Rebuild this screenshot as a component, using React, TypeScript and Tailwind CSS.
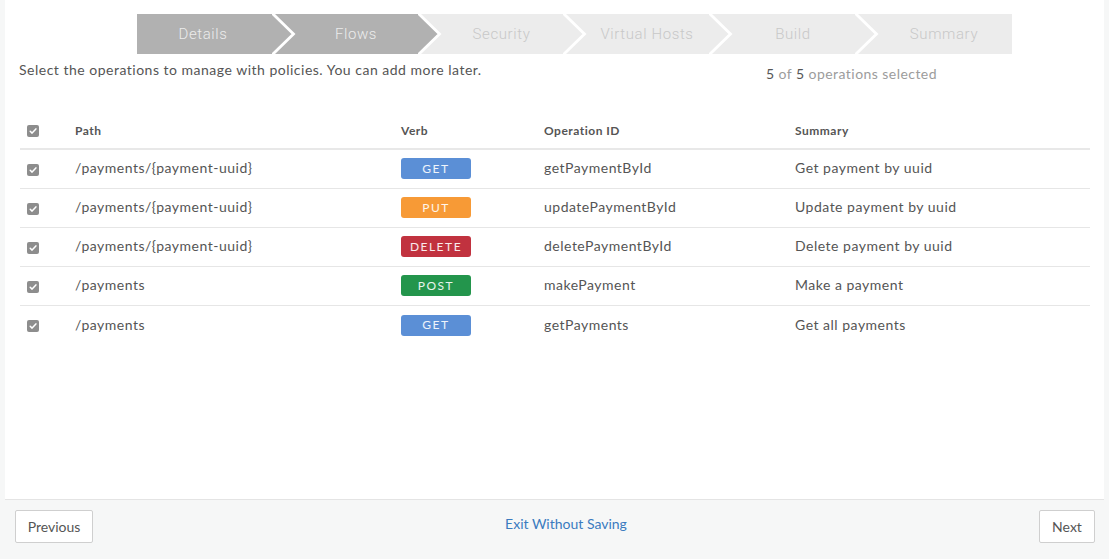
import React from 'react';

const steps = [
  { label: 'Details', done: true, box: 'w-[146px] pr-[14px]' },
  { label: 'Flows', done: true, box: 'w-[146px]' },
  { label: 'Security', done: false, box: 'w-[145px]' },
  { label: 'Virtual Hosts', done: false, box: 'w-[146px]' },
  { label: 'Build', done: false, box: 'w-[146px]' },
  { label: 'Summary', done: false, box: 'w-[146px] pl-[10px]' },
];

const operations = [
  { path: '/payments/{payment-uuid}', verb: 'GET', opId: 'getPaymentById', summary: 'Get payment by uuid' },
  { path: '/payments/{payment-uuid}', verb: 'PUT', opId: 'updatePaymentById', summary: 'Update payment by uuid' },
  { path: '/payments/{payment-uuid}', verb: 'DELETE', opId: 'deletePaymentById', summary: 'Delete payment by uuid' },
  { path: '/payments', verb: 'POST', opId: 'makePayment', summary: 'Make a payment' },
  { path: '/payments', verb: 'GET', opId: 'getPayments', summary: 'Get all payments' },
];

const verbColors: Record<string, string> = {
  GET: 'bg-[#5b8fd6]',
  PUT: 'bg-[#f79a36]',
  DELETE: 'bg-[#c1323f]',
  POST: 'bg-[#23954c]',
};

function Checkbox() {
  return (
    <svg width="12" height="12" viewBox="0 0 12 12">
      <rect x="0" y="0" width="12" height="12" rx="2" fill="#8d8d8d" />
      <path d="M3.2 6.3 L5.1 8.1 L8.9 3.9" fill="none" stroke="#fff" strokeWidth="1.5" strokeLinecap="round" strokeLinejoin="round" />
    </svg>
  );
}

function Wizard() {
  return (
    <div className="ml-[132px] flex h-10 w-[875px]">
      {steps.map((s, i) => {
        const fill = s.done ? '#b1b1b1' : '#ececec';
        const nextFill = i < steps.length - 1 && steps[i + 1].done ? '#b1b1b1' : '#ececec';
        return (
          <div
            key={s.label}
            className={`relative flex shrink-0 items-center justify-center ${s.box} ${s.done ? 'bg-[#b1b1b1] text-[#ececec]' : 'bg-[#ececec] text-[#c8c8c8]'}`}
          >
            <span className="font-['Roboto',sans-serif] text-[15px] font-light tracking-[0.6px]">{s.label}</span>
            {i < steps.length - 1 && (
              <svg className="absolute left-[calc(100%-11px)] top-0 z-10" width="25" height="40" viewBox="-1 0 25 40">
                <rect x="-1" y="0" width="25" height="40" fill={nextFill} />
                <polygon points="-1,0 20,20 -1,40" fill={fill} />
                <polyline points="-1,-1 20.5,20 -1,41" fill="none" stroke="#fff" strokeWidth="2.8" />
              </svg>
            )}
          </div>
        );
      })}
    </div>
  );
}

export default function App() {
  return (
    <div className="min-h-[559px] w-full bg-[#f6f7f7] font-['Lato',sans-serif] text-[#555]">
      {/* Main panel */}
      <div className="mx-[5px] h-[500px] border-b border-[#e4e4e4] bg-white pt-[14px]">
        <Wizard />

        <div className="mt-[6px] flex">
          <div className="w-[761px] pl-[14px] text-[14px] leading-5 tracking-[0.5px]">
            Select the operations to manage with policies. You can add more later.
          </div>
          <div className="pt-[4px] text-[14px] leading-5 tracking-[0.45px] text-[#9c9c9c]">
            <span className="text-[#555]">5</span> of <span className="text-[#555]">5</span> operations selected
          </div>
        </div>

        {/* Operations table */}
        <div className="mx-[15px] mt-[29px] w-[1070px]">
          <div className="flex h-[37px] items-center border-b-2 border-[#e8e8e8] text-[12px] font-bold tracking-[0.5px]">
            <div className="w-[55px] pl-[7px] pt-[1px]">
              <Checkbox />
            </div>
            <div className="w-[326px]">Path</div>
            <div className="w-[143px]">Verb</div>
            <div className="w-[251px]">Operation ID</div>
            <div className="flex-1">Summary</div>
          </div>

          {operations.map((op, i) => (
            <div
              key={op.opId}
              className={`flex h-[39px] items-center pb-[3px] text-[14px] tracking-[0.5px] ${i < operations.length - 1 ? 'border-b border-[#e6e6e6]' : ''}`}
            >
              <div className="w-[55px] pl-[7px] pt-[4px]">
                <Checkbox />
              </div>
              <div className="w-[326px]">{op.path}</div>
              <div className="w-[143px] pt-[2px]">
                <span
                  className={`flex h-[21px] w-[70px] items-center justify-center rounded-[3px] text-[12px] tracking-[1.5px] text-white/90 ${verbColors[op.verb]}`}
                >
                  {op.verb}
                </span>
              </div>
              <div className="w-[251px]">{op.opId}</div>
              <div className="flex-1">{op.summary}</div>
            </div>
          ))}
        </div>
      </div>

      {/* Footer */}
      <div className="flex items-start justify-between px-[15px] pr-[14px] pt-[10px]">
        <button className="h-[33px] w-[78px] rounded-[2px] border border-[#cfcfcf] bg-white pb-[1px] text-[14px] text-[#555]">
          Previous
        </button>
        <a className="pt-[4px] text-[14px] leading-5 text-[#3a7bbf]">Exit Without Saving</a>
        <button className="h-[33px] w-[56px] rounded-[2px] border border-[#cfcfcf] bg-white pb-[1px] text-[14px] text-[#555]">
          Next
        </button>
      </div>
    </div>
  );
}
